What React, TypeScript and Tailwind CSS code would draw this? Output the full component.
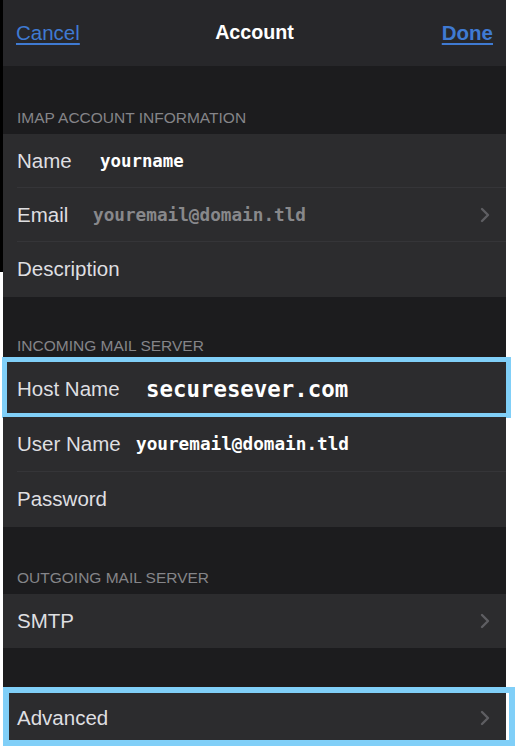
import React from "react";

const sans = "font-['Liberation_Sans',Arial,sans-serif]";
const mono = "font-['DejaVu_Sans_Mono','Liberation_Mono',monospace]";

const Chevron = () => (
    <svg width="10" height="16" viewBox="0 0 10 16" className="mr-[16px]">
        <polyline points="2,2 8,8 2,14" fill="none" stroke="#5e5e62" strokeWidth="2.4" strokeLinecap="round"
                  strokeLinejoin="round"/>
    </svg>
);

interface IRowProps {
    label: string
    labelClass?: string
    value?: string
    valueClass?: string
    height: string
    chevron?: boolean
    divider?: boolean
}

const Row: React.FC<IRowProps> = ({label, labelClass, value, valueClass, height, chevron, divider}: IRowProps) => (
    <div className={`relative flex flex-row items-center bg-[#2c2c2e] pl-[14px] ${height}`}>
        <div className={`text-[20.5px] text-[#dfdfe1] ${sans} ${labelClass ?? ""}`}>{label}</div>
        {value ? <div className={`${mono} ${valueClass ?? ""}`}>{value}</div> : <span/>}
        <div className="flex-1"/>
        {chevron ? <Chevron/> : <span/>}
        {divider ? <div className="absolute bottom-0 left-[14px] right-0 h-px bg-[#353538]"/> : <span/>}
    </div>
);

const Header: React.FC<{ text: string, height: string }> = ({text, height}) => (
    <div className={`flex flex-col justify-end bg-[#1c1c1e] pl-[14px] pb-[9px] ${height}`}>
        <span className={`text-[15.5px] uppercase text-[#858589] leading-none ${sans}`}>{text}</span>
    </div>
);

export default function App() {
    return (
        <div className="flex flex-row w-[516px] h-[748px] bg-white overflow-hidden">
            <div className="w-[3px] shrink-0">
                <div className="h-[272px] bg-black"/>
            </div>
            <div className="w-[503px] shrink-0 flex flex-col">
                {/* nav bar */}
                <div className={`h-[66px] flex flex-row items-center bg-[#27272a] px-[13px] ${sans}`}>
                    <div className="flex-1">
                        <a className="text-[20.5px] text-[#3f7ad2] underline underline-offset-[3px]">Cancel</a>
                    </div>
                    <span className="text-[19.7px] font-bold text-white">Account</span>
                    <div className="flex-1 text-right">
                        <a className="text-[20.5px] font-bold text-[#3f7ad2] underline underline-offset-[3px]">Done</a>
                    </div>
                </div>

                <Header text="IMAP Account Information" height="h-[68px]"/>
                <Row label="Name" labelClass="w-[83px]" value="yourname"
                     valueClass="text-[17.4px] font-bold text-white" height="h-[54px]" divider/>
                <Row label="Email" labelClass="w-[76px]" value="youremail@domain.tld"
                     valueClass="text-[17.7px] font-bold text-[#88888b]" height="h-[54px]" chevron divider/>
                <Row label="Description" height="h-[55px]"/>

                <Header text="Incoming Mail Server" height="h-[65px]"/>
                <div className="relative">
                    <Row label="Host Name" labelClass="w-[129px]" value="securesever.com"
                         valueClass="text-[22.4px] font-bold text-white" height="h-[55px]"/>
                    <div
                        className="absolute -top-[5px] -bottom-[1px] -left-[1px] -right-[5px] border-[5px] border-[#80cff8]"/>
                </div>
                <Row label="User Name" labelClass="w-[119px]" value="youremail@domain.tld"
                     valueClass="text-[17.7px] font-bold text-white" height="h-[55px]" divider/>
                <Row label="Password" height="h-[55px]"/>

                <Header text="Outgoing Mail Server" height="h-[67px]"/>
                <Row label="SMTP" height="h-[54px]" chevron/>

                <div className="h-[42px] bg-[#1c1c1e]"/>
                <div className="relative">
                    <Row label="Advanced" height="h-[56px]" chevron/>
                    <div
                        className="absolute -top-[3px] bottom-0 left-0 -right-[9px] border-[6px] border-[#80cff8]"/>
                </div>
            </div>
        </div>
    );
}
